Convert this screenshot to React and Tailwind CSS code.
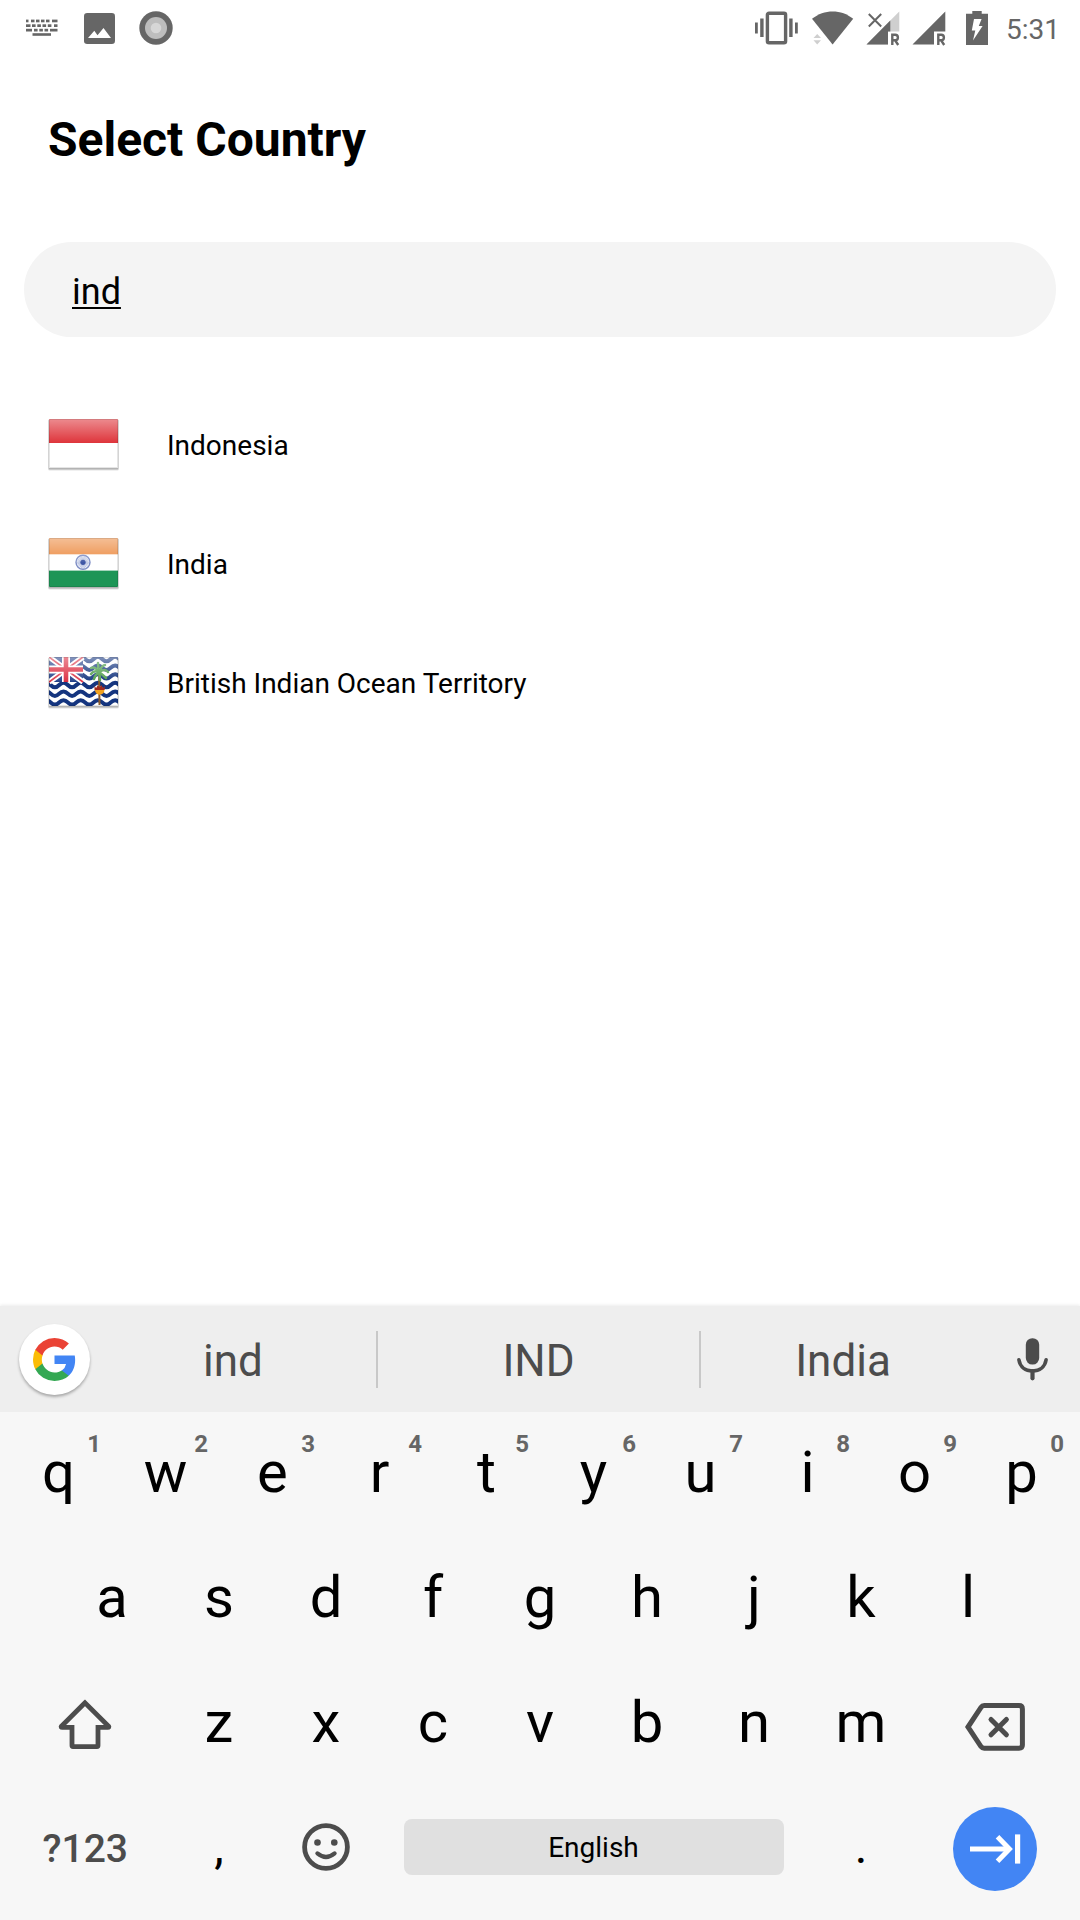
import React, { useState } from "react";

const INK = "#666666";
const KEY_INK = "#4c4c4c";

function KeyboardNoticeIcon() {
  const rows = [
    { y: 0, xs: [0, 5, 10, 15, 20, 26], ws: [2.5, 3.5, 3.5, 3.5, 3.5, 5.5] },
    { y: 4.7, xs: [0, 6, 11.3, 16.5, 21.8, 28], ws: [4.5, 3.6, 3.6, 3.6, 3.6, 3.5] },
    { y: 9.2, xs: [0, 8, 13.3, 18.5, 24], ws: [6, 3.6, 3.6, 3.6, 7.5] },
  ];
  return (
    <svg width="32" height="18" viewBox="0 0 32 18" fill={INK} aria-hidden="true">
      {rows.map((r) =>
        r.xs.map((x, i) => <rect key={`${r.y}-${x}`} x={x} y={r.y + 0.6} width={r.ws[i]} height="2.7" />)
      )}
      <rect x="6.5" y="14.2" width="18.5" height="2.6" />
    </svg>
  );
}

function PictureIcon() {
  return (
    <svg width="31" height="31" viewBox="0 0 31 31" aria-hidden="true">
      <rect width="31" height="31" rx="3.2" fill={INK} />
      <path d="M4 25 L10.3 17.8 L13.5 22.2 L19.5 15 L27 25 Z" fill="#fff" />
    </svg>
  );
}

function RecordIcon() {
  return (
    <svg width="34" height="34" viewBox="0 0 34 34" aria-hidden="true">
      <circle cx="17" cy="17" r="16.7" fill={INK} />
      <circle cx="17" cy="17" r="11" fill="#bdbdbd" />
      <circle cx="17" cy="17" r="5.3" fill="#d6d6d6" />
    </svg>
  );
}

function VibrateIcon() {
  return (
    <svg width="43" height="34" viewBox="0 0 43 34" fill={INK} aria-hidden="true">
      <rect x="12.4" y="2.2" width="18.2" height="29.6" rx="1.6" fill="none" stroke={INK} strokeWidth="3.4" />
      <rect x="0" y="11.5" width="2.8" height="11" />
      <rect x="5.2" y="7.5" width="3.4" height="18.5" />
      <rect x="34.2" y="7.5" width="3.4" height="18.5" />
      <rect x="40" y="11.5" width="2.8" height="11" />
    </svg>
  );
}

function WifiIcon() {
  return (
    <svg width="42" height="34" viewBox="0 0 42 34" aria-hidden="true">
      <path d="M0 7.8 C12 -2 29.5 -2 41.2 7.8 L20.6 33.4 Z" fill={INK} />
      <path d="M1.5 27 L5.2 23 L9 27 Z M1.5 29.2 L9 29.2 L5.2 33.4 Z" fill="#cfcfcf" />
    </svg>
  );
}

function SignalIcon({ weak }) {
  return (
    <svg width="34" height="35" viewBox="0 0 34 35" aria-hidden="true">
      <path d="M33.3 0.5 V20.5 H22 V33.5 H0.5 Z" fill={weak ? "#cfcfcf" : INK} />
      {weak && (
        <>
          <path d="M24.3 9.5 V20.5 H22 V33.5 H0.5 Z" fill={INK} />
          <path d="M2.8 3 L15.2 15.5 M15.2 3 L2.8 15.5" stroke={INK} strokeWidth="2" />
        </>
      )}
      <path d="M26.3 34 V23.8 H29.2 A2.7 2.7 0 0 1 29.2 29.2 H26.3 M29 29.2 L32.2 34" fill="none" stroke={INK} strokeWidth="2.4" />
    </svg>
  );
}

function BatteryIcon() {
  return (
    <svg width="22" height="34" viewBox="0 0 22 34" aria-hidden="true">
      <path d="M6.3 0 H15.7 V2.8 H22 V34 H0 V2.8 H6.3 Z" fill={INK} />
      <path d="M8 8 H15.6 L12.8 15 H16.6 L7 29.5 L9.3 19.5 H5.8 Z" fill="#fff" />
    </svg>
  );
}

function FlagFrame({ label, children }) {
  return (
    <svg width="71" height="53" viewBox="0 0 71 53" role="img" aria-label={label} className="shrink-0">
      <defs>
        <linearGradient id="flag-gloss" x1="0" y1="0" x2="0" y2="1">
          <stop offset="0" stopColor="#fff" stopOpacity="0.45" />
          <stop offset="1" stopColor="#fff" stopOpacity="0.04" />
        </linearGradient>
        <clipPath id="flag-clip">
          <rect x="1" y="1" width="69" height="49" rx="0.8" />
        </clipPath>
      </defs>
      <rect x="0.2" y="1.6" width="70.6" height="51" rx="1.4" fill="#000" opacity="0.12" />
      <rect x="0.6" y="1.6" width="69.8" height="50" rx="1" fill="#000" opacity="0.2" />
      <g clipPath="url(#flag-clip)">
        {children}
        <rect x="1" y="1" width="69" height="24" fill="url(#flag-gloss)" />
      </g>
      <rect x="1.5" y="1.5" width="68" height="48" rx="0.6" fill="none" stroke="#000" strokeOpacity="0.1" />
    </svg>
  );
}

function IndonesiaFlag() {
  return (
    <FlagFrame label="Flag of Indonesia">
      <rect x="1" y="1" width="69" height="49" fill="#fff" />
      <rect x="1" y="1" width="69" height="24" fill="#dd2c33" />
    </FlagFrame>
  );
}

function IndiaFlag() {
  const spokes = Array.from({ length: 12 }, (_, i) => (i * Math.PI) / 12);
  return (
    <FlagFrame label="Flag of India">
      <rect x="1" y="1" width="69" height="49" fill="#fff" />
      <rect x="1" y="1" width="69" height="16.3" fill="#ec8b41" />
      <rect x="1" y="33.6" width="69" height="17" fill="#1d9556" />
      <circle cx="35" cy="25.3" r="7" fill="#f1f3fa" stroke="#7c8cc4" strokeWidth="1.4" />
      {spokes.map((a) => (
        <line
          key={a}
          x1={35 - 6 * Math.cos(a)}
          y1={25.3 - 6 * Math.sin(a)}
          x2={35 + 6 * Math.cos(a)}
          y2={25.3 + 6 * Math.sin(a)}
          stroke="#8f9dcd"
          strokeWidth="0.5"
        />
      ))}
      <circle cx="35" cy="25.3" r="2.6" fill="#3f57a5" />
    </FlagFrame>
  );
}

function OceanTerritoryFlag() {
  const waves = [3, 11.7, 20.4, 29, 37.7, 46.4];
  return (
    <FlagFrame label="Flag of the British Indian Ocean Territory">
      <rect x="1" y="1" width="69" height="49" fill="#fff" />
      {waves.map((y) => (
        <path
          key={y}
          d={`M-6 ${y} q4.3 -4.4 8.6 0 t8.6 0 t8.6 0 t8.6 0 t8.6 0 t8.6 0 t8.6 0 t8.6 0 t8.6 0`}
          fill="none"
          stroke="#15357f"
          strokeWidth="4"
        />
      ))}
      <rect x="1" y="1" width="34" height="25" fill="#24418a" />
      <path d="M1 1 L35 26 M35 1 L1 26" stroke="#fff" strokeWidth="5.4" />
      <path d="M1 1 L35 26 M35 1 L1 26" stroke="#dc3648" strokeWidth="1.7" />
      <path d="M18 1 V26 M1 13.5 H35" stroke="#fff" strokeWidth="8" />
      <path d="M18 1 V26 M1 13.5 H35" stroke="#dc2c40" strokeWidth="4.6" />
      <path d="M51 14 L51.5 49" stroke="#8a5a2b" strokeWidth="2" />
      <g fill="none" stroke="#4f9e4c" strokeWidth="2.5" strokeLinecap="round">
        <path d="M51 16 Q47 10 43 12" />
        <path d="M51 16 Q46 14 43 18" />
        <path d="M51 16 Q47 19 46 23" />
        <path d="M51 16 Q50 9 50 7" />
        <path d="M51 16 Q54 9 57 9" />
        <path d="M51 16 Q57 12 60 16" />
        <path d="M51 16 Q55 19 58 22" />
        <path d="M51 16 Q52 21 52 24" />
      </g>
      <path d="M46.5 30 l1.6 2 l1.8 -3 l1.7 2.4 l1.7 -2.4 l1.8 3 l1.6 -2 v4 h-10.2z" fill="#a32a1c" />
      <path d="M47 34 h9.4 q0 4 -4.7 4.8 q-4.7 -0.8 -4.7 -4.8z" fill="#f2a21f" />
    </FlagFrame>
  );
}

function GoogleLogo() {
  return (
    <svg width="43" height="43" viewBox="0 0 18 18" aria-hidden="true">
      <path fill="#4285F4" d="M17.64 9.2c0-.637-.057-1.251-.164-1.84H9v3.481h4.844a4.14 4.14 0 0 1-1.796 2.716v2.259h2.908c1.702-1.567 2.684-3.875 2.684-6.615z" />
      <path fill="#34A853" d="M9 18c2.43 0 4.467-.806 5.956-2.18l-2.908-2.259c-.806.54-1.837.86-3.048.86-2.344 0-4.328-1.584-5.036-3.711H.957v2.332A8.997 8.997 0 0 0 9 18z" />
      <path fill="#FBBC05" d="M3.964 10.71A5.41 5.41 0 0 1 3.682 9c0-.593.102-1.17.282-1.71V4.958H.957A8.996 8.996 0 0 0 0 9c0 1.452.348 2.827.957 4.042l3.007-2.332z" />
      <path fill="#EA4335" d="M9 3.58c1.321 0 2.508.454 3.44 1.345l2.582-2.58C13.463.891 11.426 0 9 0A8.997 8.997 0 0 0 .957 4.958L3.964 7.29C4.672 5.163 6.656 3.58 9 3.58z" />
    </svg>
  );
}

function MicIcon() {
  return (
    <svg width="31" height="43" viewBox="0 0 31 43" aria-hidden="true">
      <rect x="8.8" y="0.2" width="13.4" height="26.4" rx="6.5" fill={KEY_INK} />
      <path d="M1.9 21.8 C3 29 8.5 33 15.5 33 S28 29 29.1 21.8" fill="none" stroke={KEY_INK} strokeWidth="3.6" strokeLinecap="round" />
      <path d="M15.5 33 V40.3" stroke={KEY_INK} strokeWidth="4.2" strokeLinecap="round" />
    </svg>
  );
}

function ShiftIcon() {
  return (
    <svg width="54" height="56" viewBox="0 -4 54 56" fill="none" stroke={KEY_INK} strokeWidth="4.8" aria-hidden="true">
      <path d="M27 4.8 L3.4 28.2 Q2.6 29.4 4.2 29.4 H14 V47.6 Q14 48.6 15 48.6 H39 Q40 48.6 40 47.6 V29.4 H49.8 Q51.4 29.4 50.6 28.2 Z" />
    </svg>
  );
}

function BackspaceIcon() {
  return (
    <svg width="60" height="59" viewBox="0 -11 60 59" fill="none" stroke={KEY_INK} strokeWidth="5" aria-hidden="true">
      <path d="M3 24 L16 4.4 Q17.2 2.6 19.2 2.6 H54 Q57.4 2.6 57.4 6 V42 Q57.4 45.2 54 45.2 H19.2 Q17.2 45.2 16 43.6 Z" />
      <path d="M26 16.4 L41.4 31.8 M41.4 16.4 L26 31.8" strokeLinecap="round" />
    </svg>
  );
}

function SmileyIcon() {
  return (
    <svg width="48" height="48" viewBox="0 0 48 48" fill="none" stroke={KEY_INK} strokeWidth="4.8" aria-hidden="true">
      <circle cx="24" cy="24" r="21.4" />
      <circle cx="15.5" cy="19.5" r="3.3" fill={KEY_INK} stroke="none" />
      <circle cx="32.3" cy="19.5" r="3.3" fill={KEY_INK} stroke="none" />
      <path d="M15.4 30.4 Q24 37.6 32.6 30.4" strokeWidth="4.2" strokeLinecap="round" />
    </svg>
  );
}

function NextIcon() {
  return (
    <svg width="52" height="30" viewBox="0 0 52 30" fill="none" stroke="#fff" aria-hidden="true">
      <path d="M1 15 H40" strokeWidth="5.2" />
      <path d="M28.5 2.8 L40.4 15 L28.5 27.2" strokeWidth="5" />
      <path d="M48.6 0.4 V29.6" strokeWidth="5.2" />
    </svg>
  );
}

const countries = [
  { name: "Indonesia", Flag: IndonesiaFlag },
  { name: "India", Flag: IndiaFlag },
  { name: "British Indian Ocean Territory", Flag: OceanTerritoryFlag },
];

function StatusBar() {
  return (
    <div className="flex h-14 items-center justify-between pr-5 pl-[26px] text-[#666666]">
      <div className="flex items-center">
        <KeyboardNoticeIcon />
        <span className="ml-[26px]"><PictureIcon /></span>
        <span className="ml-6"><RecordIcon /></span>
      </div>
      <div className="flex items-center">
        <VibrateIcon />
        <span className="ml-3.5"><WifiIcon /></span>
        <span className="ml-3"><SignalIcon weak /></span>
        <span className="ml-3"><SignalIcon /></span>
        <span className="ml-5"><BatteryIcon /></span>
        <span className="ml-[18px] pt-1 text-[28px] leading-8">5:31</span>
      </div>
    </div>
  );
}

function LetterKey({ letter, digit, className = "" }) {
  return (
    <button type="button" className={`relative col-span-2 flex items-center justify-center text-[58px] leading-[68px] text-black ${className}`}>
      {letter}
      {digit && (
        <span className="absolute top-5 right-[11px] text-2xl leading-6 font-bold text-[#666666]">{digit}</span>
      )}
    </button>
  );
}

function Keyboard() {
  const iconKey = "flex items-center justify-center";
  const suggestion = "h-[57px] pt-1 leading-[53px]";
  return (
    <section aria-label="Keyboard" className="mt-auto bg-[#f7f7f7] pb-[11px] shadow-[0_-1px_3px_rgba(0,0,0,0.08)]">
      <div className="grid h-[106px] grid-cols-[90px_288fr_323fr_284fr_95px] items-center bg-[#eeeeee] text-[44px] text-[#4c4c4c]">
        <button type="button" aria-label="Google" className="flex size-[71px] items-center justify-center justify-self-end rounded-full bg-white shadow-[0_2px_3px_rgba(0,0,0,0.3)]">
          <GoogleLogo />
        </button>
        <button type="button" className={`border-r-2 border-[#c8c8c8] ${suggestion}`}>ind</button>
        <button type="button" className={`border-r-2 border-[#c8c8c8] ${suggestion}`}>IND</button>
        <button type="button" className={suggestion}>India</button>
        <button type="button" aria-label="Voice input" className={iconKey}><MicIcon /></button>
      </div>
      <div className="grid h-[122px] grid-cols-20 px-[5px] pb-0.5">
        {"qwertyuiop".split("").map((c, i) => (
          <LetterKey key={c} letter={c} digit={String((i + 1) % 10)} />
        ))}
      </div>
      <div className="grid h-[125px] grid-cols-20 px-[5px]">
        {"asdfghjkl".split("").map((c, i) => (
          <LetterKey key={c} letter={c} className={i === 0 ? "col-start-2" : ""} />
        ))}
      </div>
      <div className="grid h-[125px] grid-cols-20 px-[5px]">
        <button type="button" aria-label="Shift" className={`col-span-3 ${iconKey}`}><ShiftIcon /></button>
        {"zxcvbnm".split("").map((c) => (
          <LetterKey key={c} letter={c} />
        ))}
        <button type="button" aria-label="Backspace" className={`col-span-3 ${iconKey}`}><BackspaceIcon /></button>
      </div>
      <div className="grid h-[125px] grid-cols-20 items-center px-[5px]">
        <button type="button" className="col-span-3 pt-1 text-[39px] leading-[48px] font-medium text-[#4c4c4c]">?123</button>
        <button type="button" className="col-span-2 text-5xl">,</button>
        <button type="button" aria-label="Emoji" className={`col-span-2 ${iconKey}`}><SmileyIcon /></button>
        <button type="button" className="col-span-8 mx-6 h-14 rounded-lg bg-[#e0e0e0] pt-0.5 text-[28px] leading-8">English</button>
        <button type="button" className="col-span-2 text-5xl">.</button>
        <div className="col-span-3 flex justify-center pt-1">
          <button type="button" aria-label="Next" className="flex size-[84px] items-center justify-center rounded-full bg-[#4285f4]"><NextIcon /></button>
        </div>
      </div>
    </section>
  );
}

export default function App() {
  const [query, setQuery] = useState("ind");
  return (
    <div className="flex min-h-screen flex-col bg-white font-[Roboto,sans-serif] text-black">
      <StatusBar />
      <main className="px-6 pt-14">
        <h1 className="px-6 text-5xl leading-[56px] font-bold">Select Country</h1>
        <input
          type="text"
          aria-label="Search country"
          value={query}
          onChange={(e) => setQuery(e.target.value)}
          className="mt-[74px] block h-[95px] w-full rounded-full bg-[#f4f4f4] px-12 pt-1 text-4xl underline decoration-2 underline-offset-3 outline-none"
        />
        <ul className="mt-12">
          {countries.map(({ name, Flag }) => (
            <li key={name}>
              <button type="button" className="flex h-[119px] w-full items-center gap-12 px-6 text-left text-[28px] leading-8">
                <Flag />
                <span className="pt-0.5">{name}</span>
              </button>
            </li>
          ))}
        </ul>
      </main>
      <Keyboard />
    </div>
  );
}
